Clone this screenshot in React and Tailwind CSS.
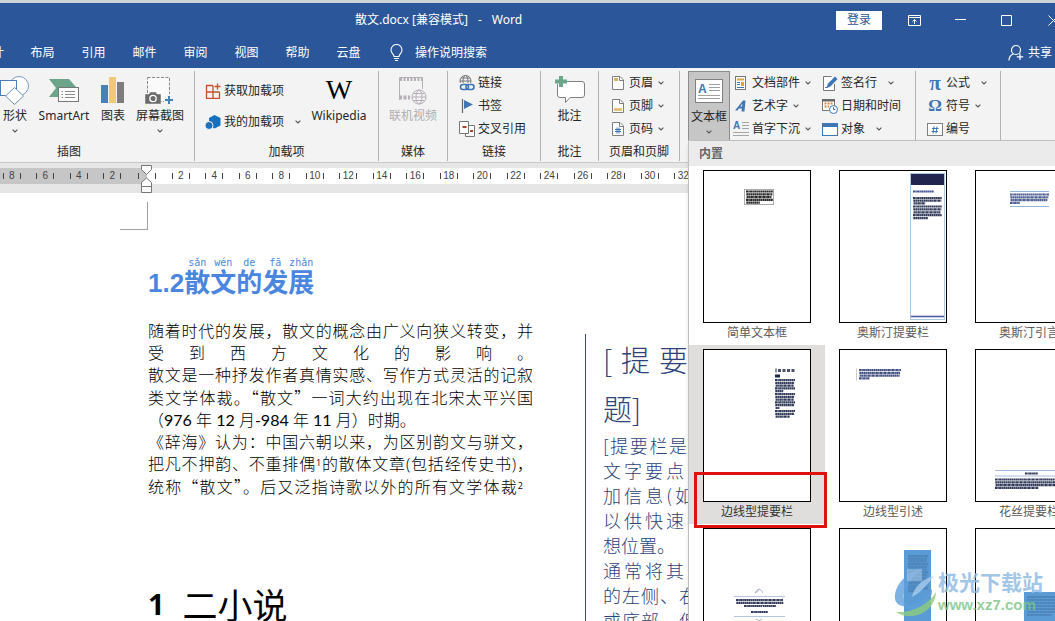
import React from "react";

const tabs = ["布局", "引用", "邮件", "审阅", "视图", "帮助", "云盘"];
const leftMarks = [8, 6, 4, 2];
const rightMarks = [2, 4, 6, 8, 10, 12, 14, 16, 18, 20, 22, 24, 26, 28, 30, 32];

/* ---------- small helpers ---------- */

function Chevron({ className = "" }) {
  return (
    <svg className={`w-[6px] h-[4px] shrink-0 ${className}`} viewBox="0 0 6 4" fill="none" stroke="#555" strokeWidth="1.1">
      <path d="M0.6 0.6L3 3L5.4 0.6" />
    </svg>
  );
}

function Svg({ w = 16, h = 16, children }) {
  return (
    <svg width={w} height={h} viewBox={`0 0 ${w} ${h}`} fill="none" className="shrink-0">
      {children}
    </svg>
  );
}

function Group({ label, width, labelClass = "text-center", children }) {
  return (
    <section className={`flex flex-col shrink-0 border-r border-[#b1b1b1] ${width}`}>
      <div className="flex h-[72px]">{children}</div>
      <h2 className={`leading-[18px] ${labelClass}`}>{label}</h2>
    </section>
  );
}

function BigButton({ icon, label, arrow, className = "" }) {
  return (
    <button className={`flex flex-col items-center shrink-0 pt-[3px] whitespace-nowrap ${className}`}>
      <span className="flex items-center justify-center h-8">{icon}</span>
      <span className="leading-[20px]">{label}</span>
      {arrow && (
        <span className="flex items-center h-[10px]">
          <Chevron />
        </span>
      )}
    </button>
  );
}

function SmallButton({ icon, label, arrow, far, tall }) {
  return (
    <button className={`flex items-center gap-[3px] whitespace-nowrap ${tall ? "h-[31px]" : "h-[23px]"}`}>
      <span className="flex items-center justify-center w-4 shrink-0">{icon}</span>
      <span>{label}</span>
      {arrow && <Chevron className={far ? "ml-2" : "ml-[2px]"} />}
    </button>
  );
}

/* ---------- ribbon icons ---------- */

const ShapesIcon = () => (
  <Svg w={30} h={30}>
    <circle cx="19" cy="11" r="9.5" stroke="#7a9cc4" fill="#fff" />
    <rect x="0.5" y="5.5" width="16" height="15" stroke="#4d7fb5" fill="#fff" />
    <path d="M14.500 12.500L23.500 21L14.500 29.500L5.500 21Z" stroke="#6a93bf" fill="#fff" />
  </Svg>
);

const SmartArtIcon = () => (
  <Svg w={30} h={28}>
    <path d="M0 3H20L27 11H9V21H0L7 12Z" fill="#6ba58a" />
    <rect x="9.500" y="11.500" width="20" height="14" fill="#fff" stroke="#777" />
    <path d="M16 15.500H26M16 18.500H26M16 21.500H26" stroke="#888" />
    <path d="M12.500 15.500H14M12.500 18.500H14M12.500 21.500H14" stroke="#888" />
  </Svg>
);

const ChartIcon = () => (
  <Svg w={24} h={28}>
    <rect x="0" y="9" width="7" height="18" fill="#4a80b8" />
    <rect x="8" y="1" width="7" height="26" fill="#efc878" />
    <rect x="16" y="6" width="7" height="21" fill="#7d7d7d" />
  </Svg>
);

const ScreenshotIcon = () => (
  <Svg w={30} h={30}>
    <rect x="2.500" y="2.500" width="22" height="24" fill="#fafafa" stroke="#888" strokeDasharray="3 1.500" />
    <path d="M0 19H4L5 17H11L12 19H16V29H0Z" fill="#6b6b6b" stroke="#f3f3f3" strokeWidth="0.500" />
    <circle cx="8" cy="23.500" r="3.200" stroke="#fff" strokeWidth="1.300" />
    <path d="M24 19V30M19 25H30" stroke="#f3f3f3" strokeWidth="4" />
    <path d="M24 21V29M20 25H28" stroke="#4a80b8" strokeWidth="2" />
  </Svg>
);

const GetAddinsIcon = () => (
  <Svg>
    <path d="M8 2.500H1.500V15.500H14.500V9M1.500 9H14.500M8 2.500V15.500" stroke="#c8512d" strokeWidth="1.300" />
    <path d="M12.500 0.500V6.500M9.500 3.500H15.500" stroke="#c8512d" strokeWidth="1.300" />
  </Svg>
);

const MyAddinsIcon = () => (
  <Svg>
    <path d="M9.500 1L15.500 4V11.500L9.500 14.500L4 11.500V4Z" fill="#1470c0" />
    <circle cx="4" cy="11.500" r="4" fill="#1470c0" stroke="#f3f3f3" />
  </Svg>
);

const VideoIcon = () => (
  <Svg w={30} h={30}>
    <path d="M1.500 25V2.500H24.500V14" stroke="#b5b0b5" />
    <path d="M2 4.500H24" stroke="#b5b0b5" strokeWidth="3" strokeDasharray="2 1.500" />
    <path d="M1 22.500H12" stroke="#b5b0b5" strokeWidth="4" strokeDasharray="3 1.500" />
    <circle cx="21" cy="22" r="7" stroke="#b5b0b5" fill="#f3f3f3" />
    <ellipse cx="21" cy="22" rx="3" ry="7" stroke="#b5b0b5" />
    <path d="M14 22H28M15.500 18.500H26.500M15.500 25.500H26.500" stroke="#b5b0b5" />
  </Svg>
);

const LinkIcon = () => (
  <Svg>
    <circle cx="6.500" cy="6" r="5.500" stroke="#777" />
    <ellipse cx="6.500" cy="6" rx="2.500" ry="5.500" stroke="#777" />
    <path d="M1 6H12M2 3H11" stroke="#777" />
    <rect x="0" y="8" width="16" height="8" fill="#f3f3f3" />
    <rect x="1.500" y="9.500" width="8" height="5" rx="2.500" stroke="#3f76b3" strokeWidth="1.600" />
    <rect x="7" y="9.500" width="8" height="5" rx="2.500" stroke="#3f76b3" strokeWidth="1.600" />
  </Svg>
);

const BookmarkIcon = () => (
  <Svg>
    <path d="M3.500 1V15" stroke="#666" strokeWidth="1.200" />
    <path d="M5 2L14 6.500L5 11Z" fill="#3f76b3" />
  </Svg>
);

const CrossRefIcon = () => (
  <Svg>
    <path d="M9.500 4.500H15.500V15.500H6.500V12.500" stroke="#777" fill="#fff" />
    <path d="M0.500 0.500H9.500V12.500H0.500Z" stroke="#777" fill="#fff" />
    <path d="M3.500 6H7.500M11 10H14" stroke="#b0432f" strokeWidth="2" />
  </Svg>
);

const CommentIcon = () => (
  <Svg w={30} h={30}>
    <path d="M4.500 6.500H27Q29.500 6.500 29.500 9V20Q29.500 22.500 27 22.500H15L10.500 27.500V22.500H5Q2.500 22.500 2.500 20V9" fill="#fff" stroke="#808080" />
    <path d="M6 1V12M0 6.500H12" stroke="#6ba58a" strokeWidth="4" />
  </Svg>
);

function PageIcon({ children }) {
  return (
    <Svg>
      <path d="M2.500 1.500H10L13.500 5V14.500H2.500Z" fill="#fff" stroke="#808080" />
      <path d="M9.500 1.500V5.500H13.500" stroke="#808080" />
      {children}
    </Svg>
  );
}

const TextBoxIcon = () => (
  <Svg w={28} h={26}>
    <rect x="0.500" y="1.500" width="27" height="23" fill="#fff" stroke="#808080" />
    <text x="3" y="15" fontSize="12" fontWeight="bold" fontFamily="Liberation Sans, sans-serif" fill="#3f76b3">A</text>
    <path d="M14 6.500H25M14 9.500H25M14 12.500H25M3 17.500H25M3 20.500H25" stroke="#a0a0a0" />
  </Svg>
);

const PartsIcon = () => (
  <Svg>
    <rect x="2.500" y="1.500" width="10" height="13" fill="#fff" stroke="#777" />
    <path d="M4 4.500H11" stroke="#d9a441" strokeWidth="2" />
    <path d="M4 7.500H7M4 9.500H7M4 12.500H11" stroke="#3f76b3" />
    <rect x="8" y="7" width="3" height="4" fill="#d9a441" />
  </Svg>
);

const WordArtIcon = () => (
  <Svg>
    <path d="M2 12.500L10 2.500H12.500L11.500 13.500H8.500L8.800 10.500H5.800L4.500 12.500ZM7.200 8.500H9L9.400 5.500Z" fill="#3f76b3" fillRule="evenodd" />
  </Svg>
);

const DropCapIcon = () => (
  <Svg>
    <text x="0" y="8" fontSize="10" fontWeight="bold" fontFamily="Liberation Sans, sans-serif" fill="#3f76b3">A</text>
    <path d="M9 1.500H16M9 4.500H16M9 7.500H16M0 11.500H16M0 14.500H16" stroke="#a5a5a5" />
  </Svg>
);

const SignatureIcon = () => (
  <Svg>
    <path d="M9.500 1.500H1.500V15.500H12.500V9" fill="#fff" stroke="#777" />
    <path d="M3 12.500H6" stroke="#777" />
    <path d="M4.500 13L6 8.500L13 1.500L15.500 4L8.500 11.500Z" fill="#3f76b3" />
  </Svg>
);

const DateIcon = () => (
  <Svg>
    <rect x="0.500" y="1.500" width="12" height="11" fill="#fff" stroke="#777" />
    <path d="M0 2.500H13" stroke="#666" strokeWidth="2" />
    <path d="M2.500 5.500H11M2.500 8.500H7" stroke="#d08a4a" strokeWidth="2" strokeDasharray="2 1" />
    <circle cx="11.500" cy="11.500" r="4" fill="#fff" stroke="#3f76b3" />
    <path d="M11.500 9V11.500H13.500" stroke="#3f76b3" />
  </Svg>
);

const ObjectIcon = () => (
  <Svg>
    <rect x="0.500" y="2.500" width="15" height="12" fill="#fff" stroke="#3f76b3" />
    <rect x="0" y="2" width="16" height="4" fill="#3f76b3" />
  </Svg>
);

const NumberIcon = () => (
  <Svg>
    <rect x="0.500" y="2.500" width="15" height="12" fill="#fff" stroke="#808080" />
    <path d="M5 7.500H11.500M4.500 10.500H11M7 5.500L6 12.500M10 5.500L9 12.500" stroke="#3f76b3" />
  </Svg>
);

/* ---------- gallery previews ---------- */

function Rows({ x, y, w, n, gap = 2.8, last = 0.5, color = "#1b2547", opacity = 0.9 }) {
  return Array.from({ length: n }, (_, i) => (
    <path
      key={i}
      d={`M${x + (i % 3) * 0.3} ${y + i * gap}h${i === n - 1 ? w * last : w - (i % 3)}`}
      stroke={color}
      strokeWidth="2.200"
      strokeDasharray="2.200 0.300 1.300 0.300"
      opacity={opacity}
    />
  ));
}

function Preview({ kind }) {
  return (
    <svg viewBox="1 1 106 151" className="w-full h-full" fill="none">
      {kind === "simple" && (
        <>
          <rect x="41.500" y="19.500" width="29" height="15" stroke="#aaa" />
          <Rows x={43} y={21.500} w={27} n={5} color="#111" />
        </>
      )}
      {kind === "austinBar" && (
        <>
          <rect x="71.500" y="3.500" width="34" height="146" stroke="#a8c8e6" />
          <rect x="72" y="4" width="33" height="11" fill="#20244f" />
          <Rows x={74} y={21.500} w={21} n={1} last={1} color="#31418a" />
          <Rows x={74} y={28} w={29} n={3} gap={2.700} last={0.4} />
          <Rows x={74} y={36.500} w={29} n={5} gap={2.900} last={0.5} />
          <path d="M72 146.500H105" stroke="#4a52a8" strokeWidth="1.500" />
        </>
      )}
      {kind === "austinQuote" && (
        <>
          <path d="M35 21.500H74M35 36.500H74" stroke="#8fb4dd" />
          <Rows x={35} y={24.500} w={39} n={4} last={0.25} color="#3b4d85" />
        </>
      )}
      {kind === "lineBar" && (
        <>
          <path d="M73 19.500v4" stroke="#1b2547" />
          <path d="M75 21.500h17" stroke="#1b2547" strokeWidth="3" strokeDasharray="3 1.500" opacity="0.8" />
          <path d="M72 27h5" stroke="#1b2547" strokeWidth="3" />
          <Rows x={72} y={31} w={20} n={5} last={0.4} />
          <Rows x={72} y={45} w={20} n={6} last={0.2} />
          <Rows x={72} y={62} w={20} n={3} last={0.7} />
        </>
      )}
      {kind === "lineQuote" && (
        <>
          <path d="M17.500 19.500V31.500" stroke="#ccc" />
          <Rows x={20} y={21} w={42} n={4} last={0.25} color="#2b3d75" />
        </>
      )}
      {kind === "filigreeBar" && (
        <>
          <path d="M20 121.500H107M20 127H107" stroke="#a9bbdc" />
          <Rows x={50} y={124.500} w={13} n={1} last={1} />
          <Rows x={20} y={130.500} w={87} n={4} last={0.5} />
        </>
      )}
      {kind === "filigreeQuote" && (
        <>
          <path d="M52 65Q53 62 56 61Q55 64 52 65M60 65Q59 62 56 61" stroke="#aab6cc" />
          <path d="M31 68.500H82M31 88.500H82" stroke="#b5c3e3" />
          <Rows x={33} y={72} w={47} n={2} last={1} />
          <Rows x={41} y={78} w={32} n={1} last={1} />
          <Rows x={48} y={84} w={17} n={1} last={1} />
          <path d="M53 91L56 93L59 91" stroke="#aab6cc" />
        </>
      )}
      {kind === "blueBar" && (
        <>
          <rect x="65" y="22" width="27" height="130" fill="#5b9bd5" />
          <Rows x={69} y={28} w={20} n={14} gap={2.700} color="#3f6e9e" opacity={0.5} />
        </>
      )}
      {kind === "blueQuote" && (
        <>
          <rect x="49" y="64" width="58" height="88" fill="#5b9bd5" />
          <Rows x={52} y={69} w={50} n={7} gap={3} color="#3f6e9e" opacity={0.5} />
        </>
      )}
    </svg>
  );
}

const gallery = [
  { name: "简单文本框", kind: "simple" },
  { name: "奥斯汀提要栏", kind: "austinBar" },
  { name: "奥斯汀引言", kind: "austinQuote" },
  { name: "边线型提要栏", kind: "lineBar", active: true },
  { name: "边线型引述", kind: "lineQuote" },
  { name: "花丝提要栏", kind: "filigreeBar" },
  { name: "花丝引言", kind: "filigreeQuote" },
  { name: "怀旧提要栏", kind: "blueBar" },
  { name: "怀旧引言", kind: "blueQuote" },
];

/* ---------- page sections ---------- */

function TitleBar() {
  return (
    <div className="flex items-center h-[34px] pl-[355px]">
      <h1 className="flex gap-[10px] whitespace-nowrap">
        <span>散文.docx [兼容模式]</span>
        <span>-</span>
        <span>Word</span>
      </h1>
      <div className="flex items-center ml-auto">
        <button className="w-[46px] h-[19px] mr-[9px] leading-[18px] bg-white text-[#2b579a]">登录</button>
        <button aria-label="功能区显示选项" className="flex justify-center w-[46px]">
          <svg width="13" height="11" viewBox="0 0 13 11" fill="none" stroke="#fff">
            <path d="M0.500 0.500H12.500V10.500H0.500ZM0.500 2.500H12.500M6.500 9V4.500M4.500 6.500L6.500 4.500L8.500 6.500" />
          </svg>
        </button>
        <button aria-label="最小化" className="flex justify-center w-[46px]">
          <svg width="11" height="11" viewBox="0 0 11 11" stroke="#fff">
            <path d="M0 4.500H11" />
          </svg>
        </button>
        <button aria-label="最大化" className="flex justify-center w-[46px]">
          <svg width="11" height="11" viewBox="0 0 11 11" fill="none" stroke="#fff">
            <path d="M0.500 0.500H10.500V10.500H0.500Z" />
          </svg>
        </button>
        <button aria-label="关闭" className="flex w-[26px] pl-[19px] overflow-hidden">
          <svg width="11" height="11" viewBox="0 0 11 11" fill="none" stroke="#fff" className="shrink-0">
            <path d="M0.500 0.500L10.500 10.500M10.500 0.500L0.500 10.500" />
          </svg>
        </button>
      </div>
    </div>
  );
}

function TabBar() {
  return (
    <nav className="flex items-center h-[31px] whitespace-nowrap">
      <button className="flex justify-end w-[17px] pr-[13px] overflow-hidden">设计</button>
      {tabs.map((tab) => (
        <button key={tab} className="w-[51px] text-center">
          {tab}
        </button>
      ))}
      <button className="flex items-center gap-3 ml-4">
        <svg width="13" height="18" viewBox="0 0 13 18" fill="none" stroke="#fff" strokeWidth="1.100">
          <path d="M4 12.500C4 10 1 9.500 1 6A5.500 5.500 0 0 1 12 6C12 9.500 9 10 9 12.500ZM4 14.500H9M5 16.500H8" />
        </svg>
        操作说明搜索
      </button>
      <button className="flex items-center gap-1 ml-auto pr-[3px]">
        <svg width="16" height="17" viewBox="0 0 16 17" fill="none" stroke="#fff" strokeWidth="1.200">
          <circle cx="8" cy="6" r="4.500" />
          <path d="M1 16.500C1 13 3 10.800 5.500 10M12 9.500V16M8.800 12.800H15.200" />
        </svg>
        共享
      </button>
    </nav>
  );
}

function Ribbon() {
  return (
    <div className="flex pt-[3px] pb-px overflow-hidden bg-[#f3f3f3] border-b border-[#c8c8c8] text-[#262626]">
      <Group label="插图" width="w-[195px]" labelClass="pl-[57px]">
        <BigButton className="w-[30px]" icon={<ShapesIcon />} label="形状" arrow />
        <BigButton className="w-[68px]" icon={<SmartArtIcon />} label="SmartArt" />
        <BigButton className="w-[30px]" icon={<ChartIcon />} label="图表" />
        <BigButton className="w-[64px]" icon={<ScreenshotIcon />} label="屏幕截图" arrow />
      </Group>
      <Group label="加载项" width="w-[184px]">
        <div className="w-[110px] pl-[10px] pt-1">
          <SmallButton tall icon={<GetAddinsIcon />} label="获取加载项" />
          <SmallButton tall icon={<MyAddinsIcon />} label="我的加载项" arrow far />
        </div>
        <BigButton
          className="w-[68px]"
          icon={<span className="font-['Liberation_Serif',serif] text-[28px] leading-[32px] text-black">W</span>}
          label="Wikipedia"
        />
      </Group>
      <Group label="媒体" width="w-[69px]">
        <BigButton className="w-full text-[#b1acb1]" icon={<VideoIcon />} label="联机视频" />
      </Group>
      <Group label="链接" width="w-[93px]">
        <div className="pl-[11px]">
          <SmallButton icon={<LinkIcon />} label="链接" />
          <SmallButton icon={<BookmarkIcon />} label="书签" />
          <SmallButton icon={<CrossRefIcon />} label="交叉引用" />
        </div>
      </Group>
      <Group label="批注" width="w-[58px]">
        <BigButton className="w-full" icon={<CommentIcon />} label="批注" />
      </Group>
      <Group label="页眉和页脚" width="w-[81px]">
        <div className="pl-[11px]">
          <SmallButton icon={<PageIcon><path d="M4 4.500H8" stroke="#d9b36a" strokeWidth="3" /></PageIcon>} label="页眉" arrow />
          <SmallButton icon={<PageIcon><path d="M4 11.500H12" stroke="#e3c27a" strokeWidth="3" /></PageIcon>} label="页脚" arrow />
          <SmallButton
            icon={<PageIcon><path d="M5 8.500H11M5 10.500H11M7 6.500V12.500M9 6.500V12.500" stroke="#3f76b3" /></PageIcon>}
            label="页码"
            arrow
          />
        </div>
      </Group>
      <Group label="文本" width="w-[236px]">
        <BigButton
          className="w-[42px] ml-2 bg-[#c6c6c6] border border-[#8c8c8c]"
          icon={<TextBoxIcon />}
          label="文本框"
          arrow
        />
        <div className="w-[89px] ml-[3px]">
          <SmallButton icon={<PartsIcon />} label="文档部件" arrow />
          <SmallButton icon={<WordArtIcon />} label="艺术字" arrow />
          <SmallButton icon={<DropCapIcon />} label="首字下沉" arrow />
        </div>
        <div>
          <SmallButton icon={<SignatureIcon />} label="签名行" arrow far />
          <SmallButton icon={<DateIcon />} label="日期和时间" />
          <SmallButton icon={<ObjectIcon />} label="对象" arrow far />
        </div>
      </Group>
      <Group label="符号" width="w-[85px]">
        <div className="pl-[11px]">
          <SmallButton
            icon={<span className="font-['Liberation_Serif',serif] font-bold text-[21px] leading-[20px] text-[#3f76b3]">π</span>}
            label="公式"
            arrow
            far
          />
          <SmallButton
            icon={<span className="font-['Liberation_Serif',serif] font-bold text-[17px] leading-[20px] text-[#3f76b3]">Ω</span>}
            label="符号"
            arrow
          />
          <SmallButton icon={<NumberIcon />} label="编号" />
        </div>
      </Group>
    </div>
  );
}

function Mark({ value }) {
  return (
    <span className="flex flex-1 justify-center">
      <span className="flex items-center justify-between w-[18px]">
        <i className="w-px h-[6px] bg-[#444]" />
        {value}
        <i className="w-px h-[6px] bg-[#444]" />
      </span>
    </span>
  );
}

function Ruler() {
  return (
    <div className="relative py-[5px] pb-[9px] bg-[#e6e6e6] overflow-hidden">
      <div className="flex h-4 leading-[18px] text-[10px] text-[#444] bg-white font-['Liberation_Sans',sans-serif]">
        <div className="flex justify-end w-[147px] shrink-0 overflow-hidden bg-[#c6c6c6]">
          <div className="flex w-[134px] shrink-0">
            {leftMarks.map((m) => <Mark key={m} value={m} />)}
          </div>
          <span className="flex items-center justify-center w-[18px] shrink-0">
            <i className="w-px h-[6px] bg-[#444]" />
          </span>
        </div>
        <span className="flex items-center justify-center w-[17px] shrink-0">
          <i className="w-px h-[6px] bg-[#444]" />
        </span>
        <div className="flex w-[536px] shrink-0">
          {rightMarks.map((m) => <Mark key={m} value={m} />)}
        </div>
      </div>
      <svg className="absolute left-[141px] top-[2px]" width="11" height="28" viewBox="0 0 11 28" fill="#fff" stroke="#777">
        <path d="M0.500 0.500H10.500V4.500L5.500 9.500L0.500 4.500Z" />
        <path d="M5.500 13L10.500 17.500V21.500H0.500V17.500Z" />
        <path d="M0.500 21.500H10.500V27.500H0.500Z" />
      </svg>
    </div>
  );
}

const heading = [
  ["sǎn", "散"],
  ["wén", "文"],
  ["de", "的"],
  ["fā", "发"],
  ["zhǎn", "展"],
];

function Line({ children, loose, className = "" }) {
  return <p className={`whitespace-nowrap ${loose ? "" : "[text-align-last:justify]"} ${className}`}>{children}</p>;
}

// full-width quotation marks come from the CJK face
function Quoted({ children }) {
  return <span className="font-['Noto_Sans_CJK_SC',sans-serif]">“{children}”</span>;
}

function Note({ children }) {
  return <sup className="text-[9px] leading-none font-normal">{children}</sup>;
}

function Document() {
  return (
    <main className="flex flex-1 min-h-0 overflow-hidden bg-white">
      <article className="w-[585px] shrink-0 pt-[9px]">
        <div className="w-7 h-7 ml-[120px] border-r border-b border-[#a0a0a0]" />
        <div className="pl-[148px] pr-[52px]">
          <h2 className="flex items-end mt-[27px] text-[26px] leading-[28px] font-bold text-[#4a86e0] font-['Liberation_Sans','Noto_Sans_CJK_SC',sans-serif]">
            <span>1.2</span>
            {heading.map(([pinyin, char]) => (
              <span key={pinyin} className="flex flex-col items-center w-[26px]">
                <small className="text-[10px] leading-[12px] font-normal font-['DejaVu_Sans_Mono',monospace]">{pinyin}</small>
                {char}
              </span>
            ))}
          </h2>
          <div className="mt-[23px] text-[16px] leading-[22px] font-light text-black font-['Open_Sans','Noto_Sans_CJK_SC',sans-serif]">
            <Line>随着时代的发展，散文的概念由广义向狭义转变，并</Line>
            <Line>受到西方文化的影响。</Line>
            <Line>散文是一种抒发作者真情实感、写作方式灵活的记叙</Line>
            <Line>类文学体裁。<Quoted>散文</Quoted>一词大约出现在北宋太平兴国</Line>
            <Line loose>
              （<span className="font-normal font-['Lato','Noto_Sans_CJK_SC',sans-serif]">976</span> 年{" "}
              <span className="font-normal font-['Lato',sans-serif]">12</span> 月
              <span className="font-normal font-['Lato',sans-serif]">-984</span> 年{" "}
              <span className="font-normal font-['Lato',sans-serif]">11</span> 月）时期。
            </Line>
            <Line>《辞海》认为：中国六朝以来，为区别韵文与骈文，</Line>
            <Line>把凡不押韵、不重排偶<Note>1</Note>的散体文章(包括经传史书)，</Line>
            <Line className="pr-[10px]">统称<Quoted>散文</Quoted>。后又泛指诗歌以外的所有文学体裁<Note>2</Note></Line>
          </div>
          <h2 className="flex items-center gap-[18px] mt-[84px] leading-[44px] text-black whitespace-nowrap">
            <span className="text-[29px] font-bold font-['Noto_Sans',sans-serif]">1</span>
            <span className="text-[35px] font-['Noto_Sans_CJK_SC',sans-serif]">二小说</span>
          </h2>
        </div>
      </article>
      <aside className="shrink-0 w-[182px] mt-[141px] pt-px pl-[17px] border-l border-[#3a5083] text-[#2c4278] font-light font-['Noto_Sans_CJK_SC',sans-serif]">
        <div className="text-[29px] leading-[49px]">
          <Line className="w-[85px]">[提要</Line>
          <Line loose>题]</Line>
        </div>
        <div className="w-[102px] text-[18px] leading-[25px]">
          <Line className="pr-[18px]">[提要栏是</Line>
          <Line>文字要点或</Line>
          <Line className="pr-3">加信息(如</Line>
          <Line>以供快速参</Line>
          <Line loose>想位置。</Line>
          <Line>通常将其置</Line>
          <Line className="pr-2">的左侧、右</Line>
          <Line className="pr-2">或底部，但</Line>
        </div>
      </aside>
    </main>
  );
}

function TextBoxMenu() {
  return (
    <div className="absolute left-[688px] top-[140px] right-0 bottom-0 overflow-hidden bg-white border-l border-t border-[#c0c0c0] shadow-md">
      <h3 className="h-[25px] pl-[10px] leading-[26px] font-semibold text-[#666] bg-[#ebebeb]">内置</h3>
      <div className="grid grid-cols-[repeat(3,136px)]">
        {gallery.map((item) => (
          <button
            key={item.kind}
            className={`flex flex-col items-center h-[179px] pt-1 ${item.active ? "bg-[#dfdedd] text-[#333]" : "text-[#5a5a5a]"}`}
          >
            <span className="block w-[108px] h-[153px] border border-black bg-white">
              <Preview kind={item.kind} />
            </span>
            <span className="leading-[20px]">{item.name}</span>
          </button>
        ))}
      </div>
    </div>
  );
}

function Watermark() {
  return (
    <div className="absolute right-[12px] bottom-[4px] flex items-center whitespace-nowrap opacity-80">
      <svg width="44" height="50" viewBox="0 0 44 50" fill="none">
        <path d="M30 1C14 4 0 17 1 32C2 38 8 40 14 39C8 34 8 22 16 14C20 9 26 4 30 1Z" fill="#5f9fdc" />
        <path d="M13 2H28V14H13Z" fill="#c9dff3" opacity="0.5" />
        <path d="M40 9C28 12 20 20 18 30C26 26 32 19 40 9Z" fill="#a9cdee" />
        <path d="M10 38C20 40 31 33 38 22C39 32 30 42 17 43C13 43 11 41 10 38Z" fill="#5f9fdc" />
        <path d="M2 45C18 46 34 38 42 25C42 38 30 50 14 49C9 49 5 47 2 45Z" fill="#8fce7c" />
      </svg>
      <div className="font-bold">
        <p className="text-[21px] leading-[26px] text-[#8cb9e2]">极光下载站</p>
        <p className="text-[15px] leading-[20px] text-[#7cc487] font-['Liberation_Sans',sans-serif]">www.xz7.com</p>
      </div>
    </div>
  );
}

export default function App() {
  return (
    <div className="relative flex flex-col h-screen overflow-hidden text-[12px] leading-[18px] font-['Noto_Sans','Noto_Sans_CJK_SC',sans-serif]">
      <header className="border-t-[3px] border-[#cfd2d6] bg-[#2b579a] text-white">
        <TitleBar />
        <TabBar />
      </header>
      <Ribbon />
      <Ruler />
      <Document />
      <TextBoxMenu />
      {/* highlight around the selected style's caption */}
      <div className="absolute left-[694px] top-[472px] w-[133px] h-[56px] border-[3px] border-[#e0120f]" />
      <Watermark />
    </div>
  );
}
